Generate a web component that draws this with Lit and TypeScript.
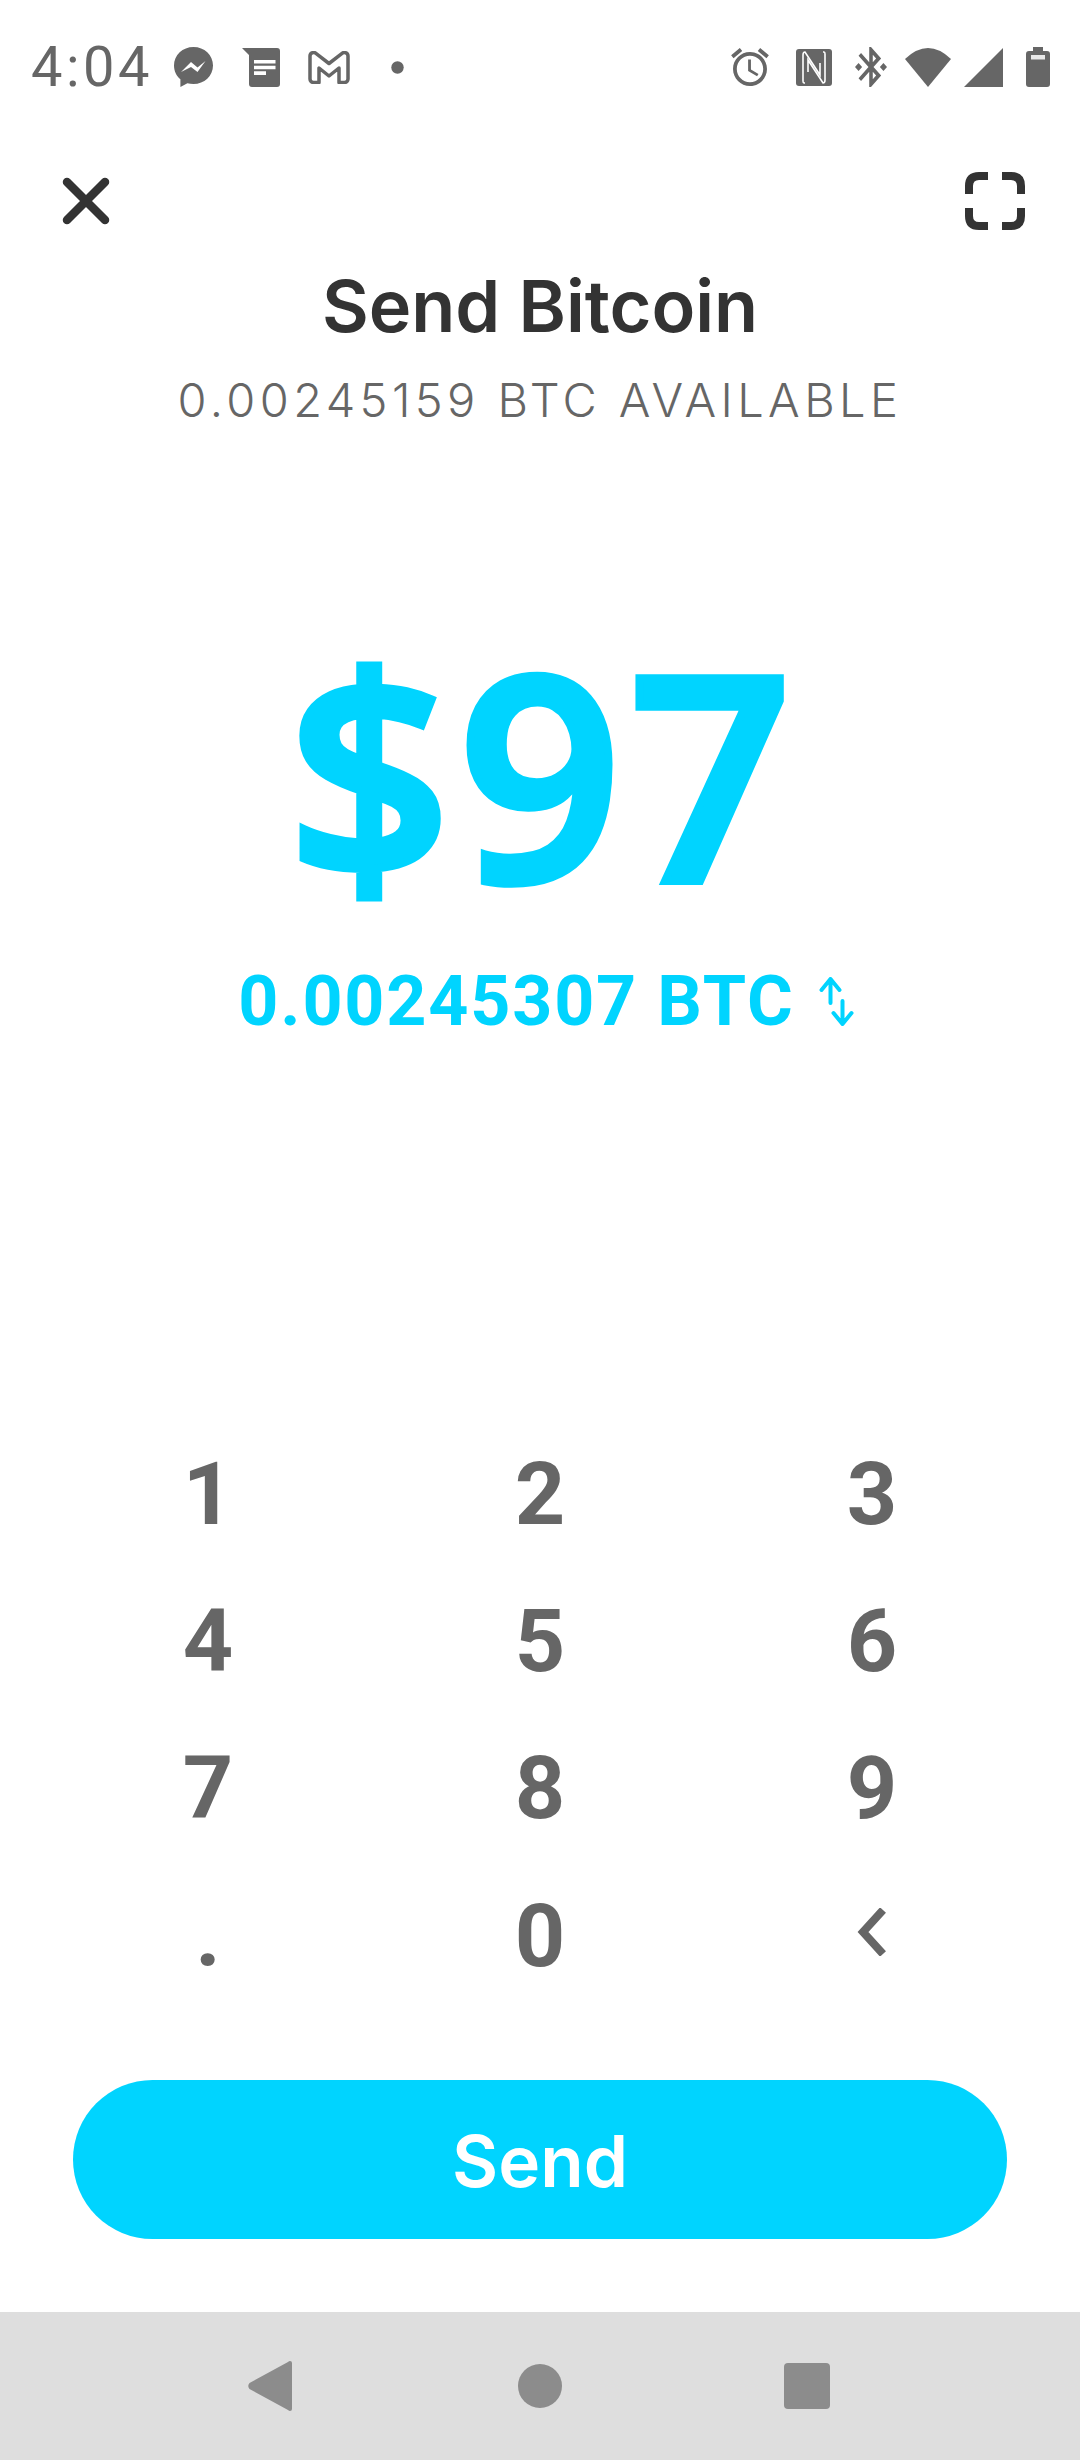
import { LitElement, html, css } from 'lit'
import { customElement } from 'lit/decorators.js'

const KEYS = ['1', '2', '3', '4', '5', '6', '7', '8', '9', '.', '0']

@customElement('app-root')
export class AppRoot extends LitElement {
  static styles = css`
    :host {
      display: flex;
      flex-direction: column;
      width: 1080px;
      height: 2460px;
      background: #fff;
      font-family: Inter, "Liberation Sans", sans-serif;
      overflow: hidden;
    }
    svg { display: block; flex: none; }

    .status {
      height: 134px;
      flex: none;
      display: flex;
      align-items: center;
      padding: 0 30px 0 31px;
      color: #666;
    }
    .time {
      font-family: Roboto, sans-serif;
      font-size: 56px;
      letter-spacing: 3.5px;
      line-height: 60px;
      width: 119px;
      white-space: nowrap;
    }
    .spacer { flex: 1; }
    .m13 { margin-left: 13px; }
    .m18 { margin-left: 18px; }
    .m23 { margin-left: 23px; }
    .m24 { margin-left: 24px; }
    .m27 { margin-left: 27px; }
    .m28 { margin-left: 28px; }
    .m29 { margin-left: 29px; }
    .m41 { margin-left: 41px; }

    .header {
      height: 134px;
      flex: none;
      display: flex;
      align-items: center;
      justify-content: space-between;
      padding: 0 55px 0 61px;
    }

    .title {
      height: 76px;
      line-height: 76px;
      flex: none;
      text-align: center;
      font-size: 72px;
      font-weight: 600;
      color: #333;
    }
    .available {
      margin-top: 28px;
      height: 56px;
      line-height: 56px;
      flex: none;
      text-align: center;
      font-size: 47px;
      font-weight: 350;
      letter-spacing: 4.4px;
      color: #666;
    }

    .amount {
      margin-top: 193px;
      padding-left: 8px;
      height: 300px;
      line-height: 300px;
      flex: none;
      text-align: center;
      font-family: "Open Sans", sans-serif;
      font-size: 284px;
      font-weight: 600;
      letter-spacing: 8px;
      color: #00d4ff;
      -webkit-text-stroke: 8px #00d4ff;
      stroke-linejoin: round;
    }
    .btc {
      margin-top: 40px;
      padding-left: 13px;
      height: 80px;
      flex: none;
      display: flex;
      align-items: center;
      justify-content: center;
      font-family: Roboto, sans-serif;
      font-size: 70px;
      font-weight: 700;
      letter-spacing: 1.8px;
      color: #00d4ff;
      white-space: nowrap;
    }
    .btc svg { margin-left: 24px; }

    .keypad {
      margin-top: 379px;
      padding: 0 42px;
      flex: none;
      display: grid;
      grid-template-columns: repeat(3, 332px);
      grid-auto-rows: 147.33px;
      align-items: center;
      justify-items: center;
      font-family: Roboto, sans-serif;
      font-size: 88px;
      font-weight: 700;
      line-height: 100px;
      color: #666;
    }
    .chevron { margin-bottom: 8px; }

    .send {
      margin: 71px 73px 0;
      padding-top: 3px;
      box-sizing: border-box;
      height: 159px;
      flex: none;
      border-radius: 80px;
      background: #00d4ff;
      display: flex;
      align-items: center;
      justify-content: center;
      font-size: 71px;
      font-weight: 600;
      color: #fff;
    }

    .nav {
      margin-top: auto;
      height: 148px;
      flex: none;
      background: #dedede;
      display: grid;
      grid-template-columns: 269px 271px 264px;
      padding-left: 135px;
      align-items: center;
      justify-items: center;
    }
  `

  render() {
    return html`
      <div class="status">
        <span class="time">4:04</span>
        <svg class="m24" width="39" height="40" viewBox="0 0 39 40">
          <path fill="#666" d="M19.500 0C8.700 0 0 8 0 18.600c0 5.600 2.400 10.400 6.400 13.700V40l7-3.700c1.900.5 3.900.8 6.100.8 10.800 0 19.500-8 19.500-18.500S30.300 0 19.500 0z" />
          <path fill="#fff" d="M7 25l10-10 6.500 5.500 8-6.500L23.500 25 17 20z" />
        </svg>
        <svg class="m29" width="38" height="39" viewBox="0 0 38 39">
          <path fill="#666" d="M0 0H35a3 3 0 0 1 3 3V36a3 3 0 0 1-3 3H10a3 3 0 0 1-3-3V7Z" />
          <path fill="#fff" d="M12 12h21.500v3.600H12zM12 17.700h21.500v3.600H12zM12 23.300h12V27H12z" />
        </svg>
        <svg class="m28" width="42" height="33" viewBox="0 0 42 33">
          <path fill="none" stroke="#666" stroke-width="3.500" stroke-linejoin="round" d="M2 5a3.500 3.500 0 0 1 5.600-2.800L21 12.500 34.400 2.200A3.500 3.500 0 0 1 40 5V28a3.500 3.500 0 0 1-3.500 3.500H31V17L21 25 11 17V31.500H5.500A3.500 3.500 0 0 1 2 28Z" />
        </svg>
        <svg class="m41" width="13" height="13" viewBox="0 0 13 13"><circle cx="6.500" cy="6.500" r="6.200" fill="#666" /></svg>
        <span class="spacer"></span>
        <svg width="38" height="38" viewBox="2 1.860 20 20.140">
          <path fill="#666" d="M22 5.720l-4.600-3.860-1.290 1.530 4.600 3.860L22 5.720zM7.880 3.390L6.600 1.860 2 5.710l1.290 1.530 4.590-3.850zM12.500 8H11v6l4.750 2.850.75-1.230-4-2.370V8zM12 4c-4.970 0-9 4.030-9 9s4.030 9 9 9 9-4.030 9-9-4.030-9-9-9zm0 16c-3.870 0-7-3.130-7-7s3.130-7 7-7 7 3.130 7 7-3.130 7-7 7z" />
        </svg>
        <svg class="m27" width="36" height="37" viewBox="0 0 36 37">
          <rect width="36" height="37" rx="3" fill="#666" />
          <path fill="none" stroke="#fff" stroke-width="1.600" d="M9 34H8Q7 34 7 32V6Q7 3 9 3L24 26V14M27 3H28Q29 3 29 5V31Q29 34 27 34L12 11V23" />
        </svg>
        <svg class="m23" width="32" height="40" viewBox="3 2 18 20" preserveAspectRatio="none">
          <path fill="#666" d="M7 12l-2-2-2 2 2 2 2-2zm10.710-4.290L12 2h-1v7.590L6.410 5 5 6.410 10.590 12 5 17.590 6.410 19 11 14.410V22h1l5.710-5.710-4.300-4.290 4.300-4.290zM13 5.830l1.880 1.880L13 9.590V5.830zm1.880 10.460L13 18.170v-3.760l1.880 1.880zM19 10l-2 2 2 2 2-2-2-2z" />
        </svg>
        <svg class="m18" width="46" height="39" viewBox="0 0 46 39"><path fill="#666" d="M0 11Q23-11 46 11L23 39Z" /></svg>
        <svg class="m13" width="39" height="39" viewBox="0 0 39 39"><path fill="#666" d="M0 39L39 0V39Z" /></svg>
        <svg class="m23" width="24" height="40" viewBox="0 0 24 40">
          <path fill="#666" d="M7 0h10v4h4a3 3 0 0 1 3 3v30a3 3 0 0 1-3 3H3a3 3 0 0 1-3-3V7a3 3 0 0 1 3-3h4z" />
          <rect x="5" y="8" width="14" height="4.500" fill="#fff" opacity=".85" />
        </svg>
      </div>

      <div class="header">
        <svg width="50" height="50" viewBox="0 0 50 50">
          <path fill="none" stroke="#333" stroke-width="8.500" stroke-linecap="round" d="M6 6L44 44M44 6L6 44" />
        </svg>
        <svg width="60" height="58" viewBox="0 0 60 58">
          <path fill="none" stroke="#333" stroke-width="8" d="M4 22V14Q4 4 14 4H23M37 4H46Q56 4 56 14V22M4 36V44Q4 54 14 54H23M37 54H46Q56 54 56 44V36" />
        </svg>
      </div>

      <div class="title">Send Bitcoin</div>
      <div class="available">0.00245159 BTC AVAILABLE</div>
      <div class="amount">$97</div>
      <div class="btc">
        <span>0.00245307 BTC</span>
        <svg width="36" height="49" viewBox="0 0 36 49">
          <path fill="none" stroke="#00d4ff" stroke-width="4" stroke-linecap="round" stroke-linejoin="round" d="M11.500 26V2M2.500 13L11.500 2 20.500 13M23.500 24V47M14.500 36L23.500 47 32.500 36" />
        </svg>
      </div>

      <div class="keypad">
        ${KEYS.map((k) => html`<span>${k}</span>`)}
        <svg class="chevron" width="30" height="48" viewBox="0 0 30 48">
          <path fill="none" stroke="#666" stroke-width="8" d="M26 2L6 24 26 46" />
        </svg>
      </div>

      <div class="send">Send</div>

      <div class="nav">
        <svg width="44" height="50" viewBox="0 0 44 50">
          <path fill="#8c8c8c" d="M44 2V48Q44 50 42 50 41 50 40 49L1.500 28Q-1 25 1.500 22L40 1Q41 0 42 0 44 0 44 2Z" />
        </svg>
        <svg width="44" height="44" viewBox="0 0 44 44"><circle cx="22" cy="22" r="22" fill="#8c8c8c" /></svg>
        <svg width="46" height="46" viewBox="0 0 46 46"><rect width="46" height="46" rx="4" fill="#8c8c8c" /></svg>
      </div>
    `
  }
}
